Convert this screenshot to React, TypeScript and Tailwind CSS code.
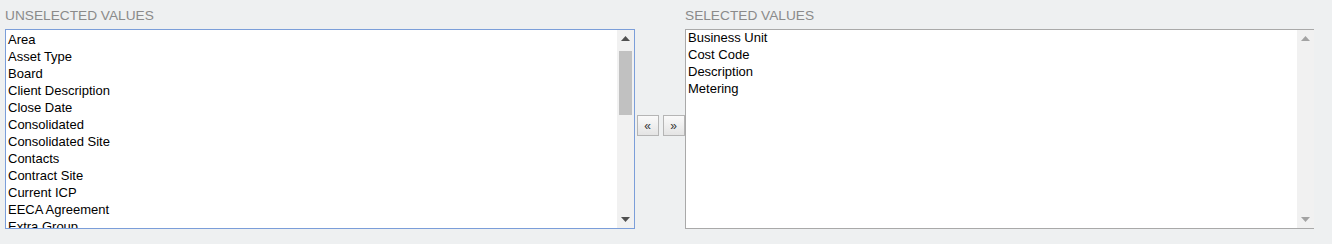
const unselected = [
  "Area",
  "Asset Type",
  "Board",
  "Client Description",
  "Close Date",
  "Consolidated",
  "Consolidated Site",
  "Contacts",
  "Contract Site",
  "Current ICP",
  "EECA Agreement",
  "Extra Group",
  "Financial Year",
]

const selected = ["Business Unit", "Cost Code", "Description", "Metering"]

function Scrollbar({ active }: { active: boolean }) {
  const arrow = active ? "#505050" : "#a3a3a3"
  return (
    <div className="relative w-[17px] shrink-0 bg-[#f1f1f1]">
      <svg className="absolute left-[4px] top-[6px]" width="9" height="5" viewBox="0 0 9 5">
        <path d="M4.5 0 L9 5 L0 5 Z" fill={arrow} />
      </svg>
      {active && <div className="absolute left-[2px] top-[21px] h-[64px] w-[13px] bg-[#c1c1c1]" />}
      <svg className="absolute bottom-[6px] left-[4px]" width="9" height="5" viewBox="0 0 9 5">
        <path d="M0 0 L9 0 L4.5 5 Z" fill={arrow} />
      </svg>
    </div>
  )
}

function ListBox({ items, focused }: { items: string[]; focused: boolean }) {
  return (
    <div
      className={`flex h-[200px] border bg-white ${
        focused ? "border-[#7b9ed9]" : "border-[#a9a9a9] border-r-0"
      }`}
    >
      <div
        className={`flex-1 overflow-hidden pl-[2px] text-[13px] leading-[17px] text-black ${
          focused ? "pt-[1px]" : "-mt-[1px]"
        }`}
      >
        {items.map((item) => (
          <div key={item} className="whitespace-nowrap">
            {item}
          </div>
        ))}
      </div>
      <Scrollbar active={focused} />
    </div>
  )
}

function MoveButton({ label }: { label: string }) {
  return (
    <button className="flex h-[21px] w-[22px] items-center justify-center border border-[#b5b5b5] bg-gradient-to-b from-[#fafafa] to-[#e4e4e4] text-[12px] leading-none text-[#333]">
      {label}
    </button>
  )
}

export default function App() {
  return (
    <div className="h-[244px] w-[1332px] bg-[#eef0f1] pl-[5px] pt-[8px] font-['Liberation_Sans',Arial,sans-serif]">
      <div className="flex w-[1309px] items-end">
        <div className="w-[630px]">
          <div className="mb-[5px] text-[13.7px] leading-[16px] text-[#8a8a8a]">UNSELECTED VALUES</div>
          <ListBox items={unselected} focused />
        </div>
        <div className="flex w-[50px] justify-center gap-[4px] self-center pt-[14px] pl-[1px]">
          <MoveButton label="«" />
          <MoveButton label="»" />
        </div>
        <div className="w-[629px]">
          <div className="mb-[5px] text-[13.7px] leading-[16px] text-[#8a8a8a]">SELECTED VALUES</div>
          <ListBox items={selected} focused={false} />
        </div>
      </div>
    </div>
  )
}
